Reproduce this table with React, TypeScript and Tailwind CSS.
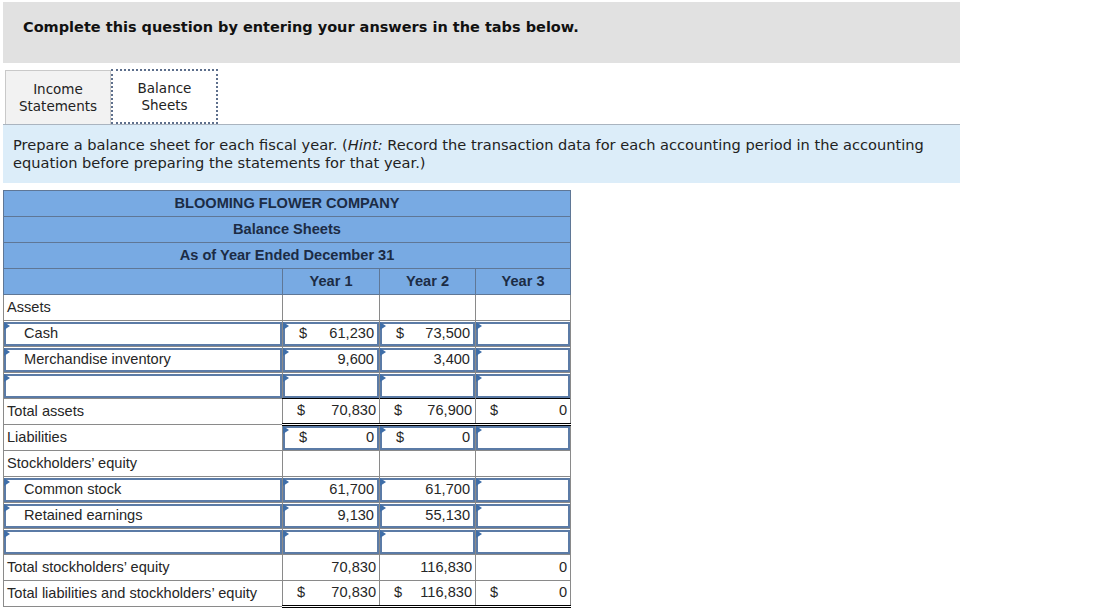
import React from "react";

type Cell = { dollar?: boolean; value?: string; input?: boolean };
type Row = {
  label: string;
  indent?: boolean;
  labelInput?: boolean;
  cells: Cell[];
  kind?: "section" | "total" | "grand" | "totalSingle";
};

const rows: Row[] = [
  { label: "Assets", kind: "section", cells: [{}, {}, {}] },
  {
    label: "Cash",
    indent: true,
    labelInput: true,
    cells: [
      { input: true, dollar: true, value: "61,230" },
      { input: true, dollar: true, value: "73,500" },
      { input: true },
    ],
  },
  {
    label: "Merchandise inventory",
    indent: true,
    labelInput: true,
    cells: [
      { input: true, value: "9,600" },
      { input: true, value: "3,400" },
      { input: true },
    ],
  },
  { label: "", labelInput: true, cells: [{ input: true }, { input: true }, { input: true }] },
  {
    label: "Total assets",
    kind: "total",
    cells: [
      { dollar: true, value: "70,830" },
      { dollar: true, value: "76,900" },
      { dollar: true, value: "0" },
    ],
  },
  {
    label: "Liabilities",
    cells: [
      { input: true, dollar: true, value: "0" },
      { input: true, dollar: true, value: "0" },
      { input: true },
    ],
  },
  { label: "Stockholders’ equity", kind: "section", cells: [{}, {}, {}] },
  {
    label: "Common stock",
    indent: true,
    labelInput: true,
    cells: [
      { input: true, value: "61,700" },
      { input: true, value: "61,700" },
      { input: true },
    ],
  },
  {
    label: "Retained earnings",
    indent: true,
    labelInput: true,
    cells: [
      { input: true, value: "9,130" },
      { input: true, value: "55,130" },
      { input: true },
    ],
  },
  { label: "", labelInput: true, cells: [{ input: true }, { input: true }, { input: true }] },
  {
    label: "Total stockholders’ equity",
    kind: "totalSingle",
    cells: [{ value: "70,830" }, { value: "116,830" }, { value: "0" }],
  },
  {
    label: "Total liabilities and stockholders’ equity",
    kind: "grand",
    cells: [
      { dollar: true, value: "70,830" },
      { dollar: true, value: "116,830" },
      { dollar: true, value: "0" },
    ],
  },
];

function Flag() {
  return (
    <span className="absolute -left-[2px] -top-[2px] w-0 h-0 border-t-[4px] border-b-[4px] border-l-[6px] border-t-transparent border-b-transparent border-l-[#3f6ea8]" />
  );
}

function InputBox({ children, indent }: { children?: React.ReactNode; indent?: boolean }) {
  return (
    <div className="relative h-[24px] border-2 border-[#5b7ba6] bg-white flex items-center">
      <Flag />
      {children && (
        <span className={indent ? "pl-[18px]" : "pl-[4px]"}>{children}</span>
      )}
    </div>
  );
}

function Amount({ cell }: { cell: Cell }) {
  return (
    <div className="flex items-center justify-between h-full pl-[14px] pr-[3px]">
      <span>{cell.dollar ? "$" : ""}</span>
      <span>{cell.value ?? ""}</span>
    </div>
  );
}

export default function App() {
  return (
    <div className="w-[1119px] h-[613px] bg-white pt-[2px] pl-[3px] font-['DejaVu_Sans',sans-serif]">
      <div className="w-[957px] h-[61px] bg-[#e1e1e1] flex items-center pl-[20px]">
        <h1 className="text-[14.5px] font-bold text-[#111] -mt-[9px]">
          Complete this question by entering your answers in the tabs below.
        </h1>
      </div>

      <div className="flex items-end h-[61px] pl-[2px]">
        <div className="w-[106px] h-[54px] bg-[#f2f2f2] border border-[#c9c9c9] border-b-0 flex items-center justify-center text-center text-[13.5px] leading-[17px] text-[#222] pt-[1px]">
          Income
          <br />
          Statements
        </div>
        <div className="w-[107px] h-[55px] bg-white border-2 border-dotted border-[#5d6f8c] flex items-center justify-center text-center text-[13.5px] leading-[17px] text-[#222] pt-[1px]">
          Balance
          <br />
          Sheets
        </div>
      </div>

      <div className="w-[957px] h-[59px] bg-[#dcedf9] border-t border-[#aab4bf] pl-[10px] pt-[11px] text-[14.6px] leading-[18px] text-[#222]">
        Prepare a balance sheet for each fiscal year. (<i>Hint:</i> Record the transaction data for each accounting period in the accounting
        <br />
        equation before preparing the statements for that year.)
      </div>

      <table className="mt-[7px] border-collapse table-fixed w-[567px] font-['Liberation_Sans',Arial,sans-serif] text-[14.6px] text-[#262626]">
        <colgroup>
          <col className="w-[279px]" />
          <col className="w-[97px]" />
          <col className="w-[96px]" />
          <col className="w-[95px]" />
        </colgroup>
        <thead className="text-[#1c2c45] font-bold">
          <tr className="h-[26px] bg-[#78aae3]">
            <th colSpan={4} className="border border-[#5f7796] font-bold text-center">
              BLOOMING FLOWER COMPANY
            </th>
          </tr>
          <tr className="h-[26px] bg-[#78aae3]">
            <th colSpan={4} className="border border-[#5f7796] font-bold text-center">
              Balance Sheets
            </th>
          </tr>
          <tr className="h-[26px] bg-[#78aae3]">
            <th colSpan={4} className="border border-[#5f7796] font-bold text-center">
              As of Year Ended December 31
            </th>
          </tr>
          <tr className="h-[26px] bg-[#78aae3]">
            <th className="border border-[#5f7796]" />
            <th className="border border-[#5f7796] font-bold text-center">Year 1</th>
            <th className="border border-[#5f7796] font-bold text-center">Year 2</th>
            <th className="border border-[#5f7796] font-bold text-center">Year 3</th>
          </tr>
        </thead>
        <tbody>
          {rows.map((r, i) => {
            const numTop =
              r.kind === "total" || r.kind === "totalSingle"
                ? "border-t-black"
                : "border-t-[#8a8a8a]";
            const numBottom =
              r.kind === "total" || r.kind === "grand"
                ? "border-b-[3px] border-b-black border-double"
                : "";
            return (
              <tr key={i} className="h-[26px]">
                <td className="border border-[#8a8a8a] p-0">
                  {r.labelInput ? (
                    <InputBox indent={r.indent}>{r.label}</InputBox>
                  ) : (
                    <span className="pl-[3px]">{r.label}</span>
                  )}
                </td>
                {r.cells.map((c, j) => (
                  <td
                    key={j}
                    className={`border border-[#8a8a8a] p-0 ${numTop} ${numBottom}`}
                  >
                    {c.input ? (
                      <div className="relative h-[24px] border-2 border-[#5b7ba6] bg-white">
                        <Flag />
                        <Amount cell={c} />
                      </div>
                    ) : (
                      <div className="h-[23px]">
                        <Amount cell={c} />
                      </div>
                    )}
                  </td>
                ))}
              </tr>
            );
          })}
        </tbody>
      </table>
    </div>
  );
}
